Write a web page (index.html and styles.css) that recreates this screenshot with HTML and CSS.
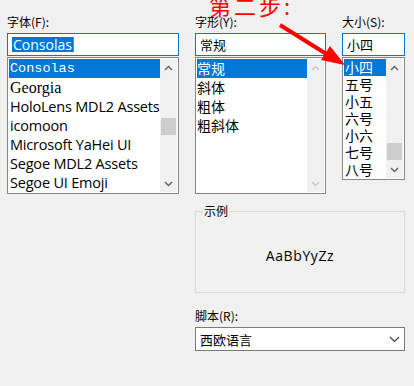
FILE: index.html
```html
<!DOCTYPE html>
<html lang="zh-CN">
<head>
    <meta charset="UTF-8">
    <title>字体</title>
    <link rel="stylesheet" href="styles.css">
</head>
<body>
    <div class="dialog">
        <div class="pickers">
            <div class="picker">
                <label class="caption">字体(F):</label>
                <div class="field focused"><span class="sel-text">Consolas</span><span class="caret"></span></div>
                <div class="listbox tall">
                    <ul class="items">
                        <li class="active f-mono">Consolas</li>
                        <li class="f-serif">Georgia</li>
                        <li>HoloLens MDL2 Assets</li>
                        <li>icomoon</li>
                        <li>Microsoft YaHei UI</li>
                        <li>Segoe MDL2 Assets</li>
                        <li>Segoe UI Emoji</li>
                    </ul>
                    <div class="scrollbar">
                        <span class="arrow up"><svg width="9" height="6" viewBox="0 0 9 6"><path d="M1 5 L4.5 1.5 L8 5" fill="none" stroke="#606060" stroke-width="1.4"/></svg></span>
                        <span class="track"><span class="thumb" style="margin-top:42px"></span></span>
                        <span class="arrow down"><svg width="9" height="6" viewBox="0 0 9 6"><path d="M1 1 L4.5 4.5 L8 1" fill="none" stroke="#606060" stroke-width="1.4"/></svg></span>
                    </div>
                </div>
            </div>

            <div class="picker">
                <label class="caption">字形(Y):</label>
                <div class="field">常规</div>
                <div class="listbox tall">
                    <ul class="items cjk">
                        <li class="active">常规</li>
                        <li>斜体</li>
                        <li>粗体</li>
                        <li>粗斜体</li>
                    </ul>
                    <div class="scrollbar off">
                        <span class="arrow up"><svg width="9" height="6" viewBox="0 0 9 6"><path d="M1 5 L4.5 1.5 L8 5" fill="none" stroke="#c8c8c8" stroke-width="1.4"/></svg></span>
                        <span class="track"></span>
                        <span class="arrow down"><svg width="9" height="6" viewBox="0 0 9 6"><path d="M1 1 L4.5 4.5 L8 1" fill="none" stroke="#c8c8c8" stroke-width="1.4"/></svg></span>
                    </div>
                </div>
            </div>

            <div class="picker">
                <label class="caption">大小(S):</label>
                <div class="field">小四</div>
                <div class="listbox short">
                    <ul class="items cjk sizes">
                        <li class="active">小四</li>
                        <li>五号</li>
                        <li>小五</li>
                        <li>六号</li>
                        <li>小六</li>
                        <li>七号</li>
                        <li>八号</li>
                    </ul>
                    <div class="scrollbar">
                        <span class="arrow up"><svg width="9" height="6" viewBox="0 0 9 6"><path d="M1 5 L4.5 1.5 L8 5" fill="none" stroke="#606060" stroke-width="1.4"/></svg></span>
                        <span class="track"><span class="thumb" style="margin-top:67px"></span></span>
                        <span class="arrow down"><svg width="9" height="6" viewBox="0 0 9 6"><path d="M1 1 L4.5 4.5 L8 1" fill="none" stroke="#606060" stroke-width="1.4"/></svg></span>
                    </div>
                </div>
            </div>
        </div>

        <div class="lower">
            <fieldset class="sample">
                <legend>示例</legend>
                <div class="sample-text">AaBbYyZz</div>
            </fieldset>

            <label class="caption">脚本(R):</label>
            <div class="combo">
                <span>西欧语言</span>
                <svg width="11" height="7" viewBox="0 0 11 7"><path d="M1 1 L5.5 5.5 L10 1" fill="none" stroke="#404040" stroke-width="1.2"/></svg>
            </div>
        </div>

        <!-- 标注 -->
        <div class="note">第二步:</div>
        <svg class="pointer" width="414" height="90" viewBox="0 0 414 90">
            <line x1="280" y1="25" x2="328" y2="55" stroke="#ff0000" stroke-width="4"/>
            <polygon points="345,65 321,60 330,46" fill="#ff0000"/>
        </svg>
    </div>
</body>
</html>
```

FILE: styles.css
```css
/* Janela de fontes */
body {
    margin: 0;
    background-color: #f0f0f0;
    font-family: "Noto Sans", "Noto Sans CJK SC", sans-serif;
    color: #000;
}

.dialog {
    position: relative;
    width: 414px;
    height: 386px;
    overflow: hidden;
    padding: 14px 0 0 7px;
    box-sizing: border-box;
}

.pickers {
    display: grid;
    grid-template-columns: 172px 131px 63px;
    column-gap: 16px;
}

.picker {
    display: flex;
    flex-direction: column;
}

.caption {
    font-family: "Noto Sans CJK SC", sans-serif;
    font-size: 12px;
    line-height: 16px;
    height: 19px;
    display: block;
}

.field {
    height: 23px;
    box-sizing: border-box;
    border: 1px solid #0078d7;
    background-color: #fff;
    font-family: "Noto Sans CJK SC", sans-serif;
    font-size: 13px;
    line-height: 21px;
    padding-left: 4px;
    display: flex;
    align-items: center;
}

.sel-text {
    background-color: #0078d7;
    color: #fff;
    font-family: "Open Sans", sans-serif;
    font-size: 14px;
    line-height: 15px;
    padding: 0 1px;
}

.caret {
    width: 1px;
    height: 15px;
    background-color: #d86f1e;
}

.listbox {
    margin-top: 1px;
    border: 1px solid #828790;
    background-color: #fff;
    display: flex;
    box-sizing: border-box;
    padding: 1px;
}

.listbox.tall {
    height: 137px;
}

.listbox.short {
    height: 123px;
}

.items {
    list-style: none;
    margin: 0;
    padding: 0;
    flex: 1;
    overflow: hidden;
    white-space: nowrap;
}

.items li {
    height: 19px;
    line-height: 19px;
    font-family: "Open Sans", sans-serif;
    font-size: 14.5px;
    letter-spacing: -0.2px;
    padding-left: 1px;
}

.items .f-mono {
    font-family: "Liberation Mono", monospace;
    font-size: 13.5px;
    letter-spacing: 0;
}

.items .f-serif {
    font-family: "Liberation Serif", serif;
    font-size: 16px;
    letter-spacing: 0;
}

.items.cjk li {
    font-family: "Noto Sans CJK SC", sans-serif;
    font-size: 14px;
    padding-left: 0;
    letter-spacing: 0;
}

.items.sizes li {
    height: 17px;
    line-height: 17px;
    padding-left: 1px;
}

.items li.active {
    background-color: #0078d7;
    color: #fff;
}

.scrollbar {
    width: 17px;
    background-color: #f0f0f0;
    display: flex;
    flex-direction: column;
}

.arrow {
    height: 17px;
    display: flex;
    align-items: center;
    justify-content: center;
}

.track {
    flex: 1;
    display: flex;
    flex-direction: column;
}

.thumb {
    display: block;
    height: 17px;
    margin: 0 1px;
    background-color: #cdcdcd;
}

.lower {
    margin-left: 188px;
    width: 210px;
    margin-top: 10px;
}

.sample {
    margin: 0;
    padding: 0;
    border: 1px solid #dcdcdc;
    height: 89px;
    box-sizing: border-box;
}

.sample legend {
    font-family: "Noto Sans CJK SC", sans-serif;
    font-size: 12px;
    line-height: 14px;
    padding: 0 1px;
    margin-left: 7px;
}

.sample-text {
    text-align: center;
    font-family: "Open Sans", sans-serif;
    font-size: 14px;
    margin-top: 28px;
    letter-spacing: 0.6px;
}

.lower .caption {
    margin-top: 15px;
}

.combo {
    height: 24px;
    box-sizing: border-box;
    border: 1px solid #7a7a7a;
    background-color: #fff;
    display: flex;
    align-items: center;
    justify-content: space-between;
    padding: 0 4px 0 4px;
    font-family: "Noto Sans CJK SC", sans-serif;
    font-size: 13px;
}

/* anotação vermelha por cima */
.note {
    position: absolute;
    left: 209px;
    top: -11px;
    color: #ff0000;
    font-family: "Noto Sans CJK SC", sans-serif;
    font-size: 22px;
    letter-spacing: 3px;
}

.pointer {
    position: absolute;
    left: 0;
    top: 0;
}
```
